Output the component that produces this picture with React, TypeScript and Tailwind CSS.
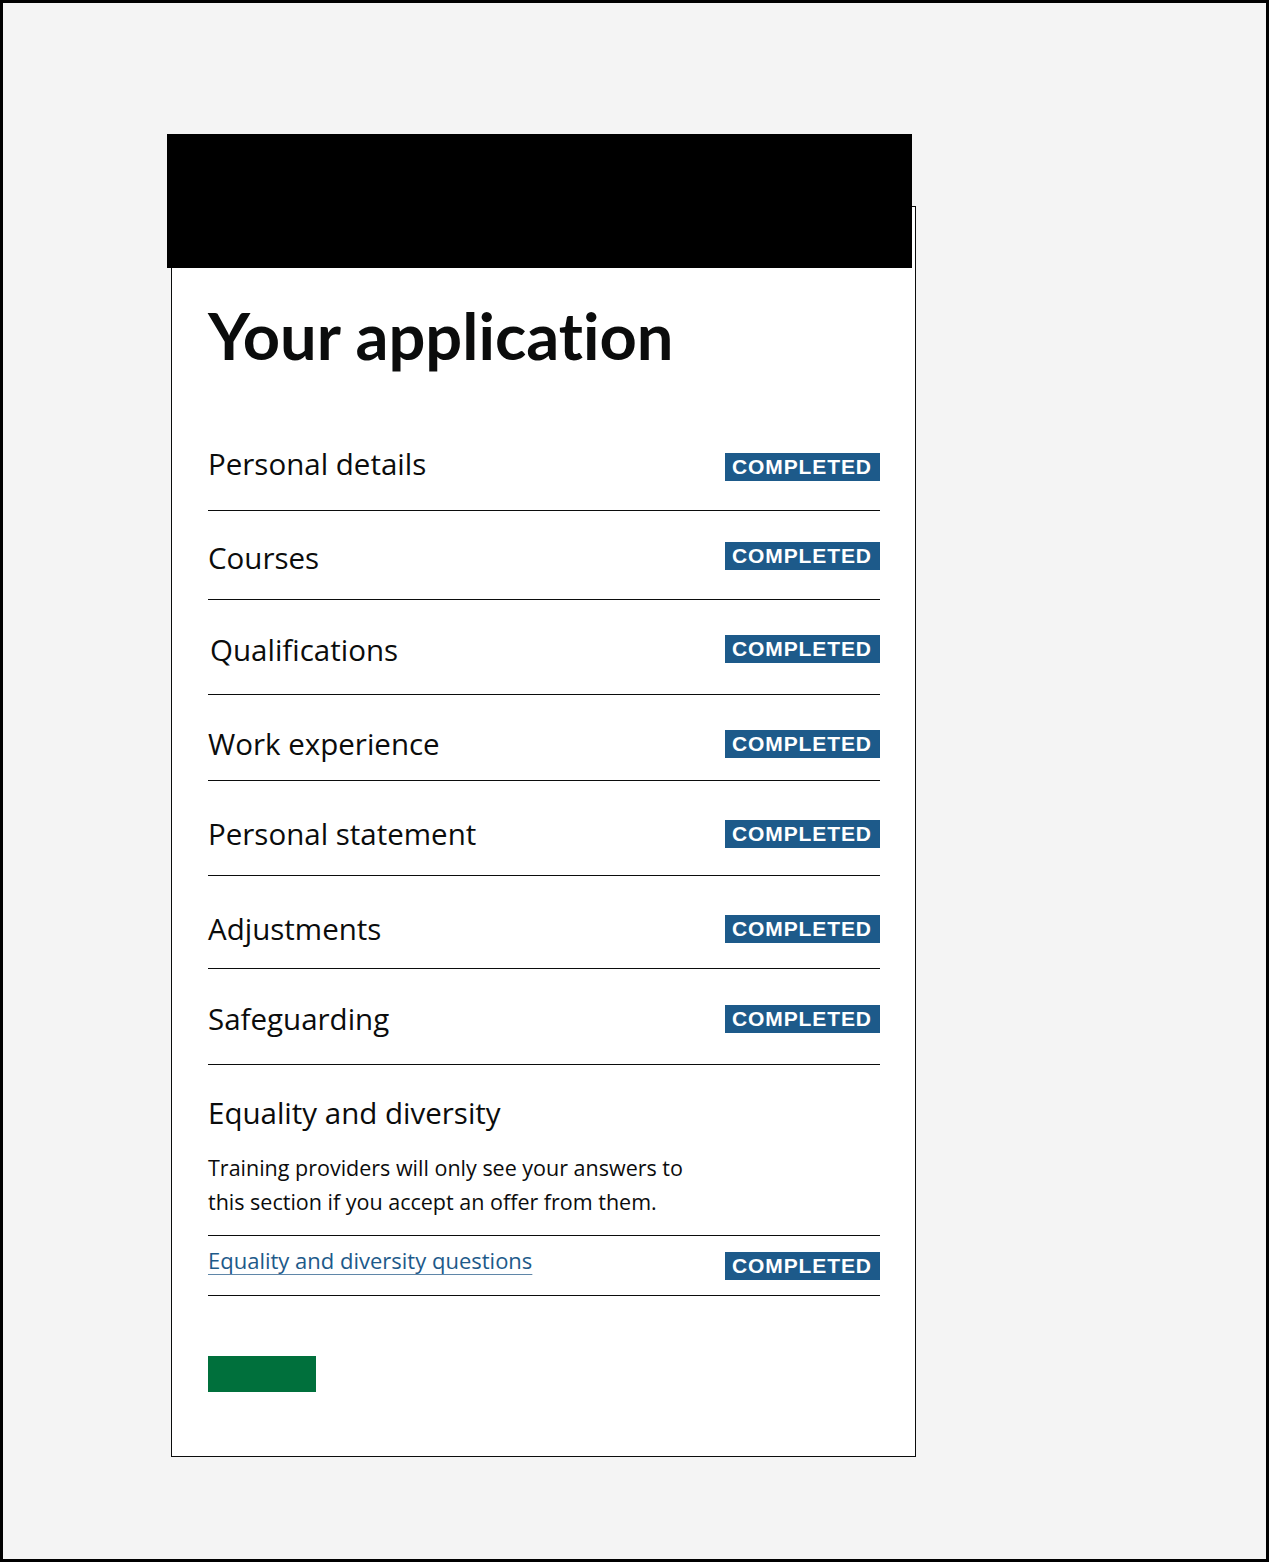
import React from "react";

const BLUE = "#1d5a8a";

function Badge() {
  return (
    <strong
      className="block h-[28px] w-[155px] shrink-0 bg-[#1d5a8a] pl-[7px] text-[21px] font-bold uppercase leading-[28px] tracking-[0.9px] text-white"
      style={{ fontFamily: '"Liberation Sans", Arial, sans-serif' }}
    >
      Completed
    </strong>
  );
}

type Row = { label: string; pt: string; pb: string; nudge: string };

const rows: Row[] = [
  { label: "Personal details", pt: "pt-[31px]", pb: "pb-[29px]", nudge: "-mt-[3px] mb-[3px]" },
  { label: "Courses", pt: "pt-[31px]", pb: "pb-[29px]", nudge: "mt-[2px] -mb-[2px]" },
  { label: "Qualifications", pt: "pt-[35px]", pb: "pb-[31px]", nudge: "mt-[1px] -mb-[1px] ml-[2px]" },
  { label: "Work experience", pt: "pt-[35px]", pb: "pb-[22px]", nudge: "" },
  { label: "Personal statement", pt: "pt-[39px]", pb: "pb-[27px]", nudge: "" },
  { label: "Adjustments", pt: "pt-[39px]", pb: "pb-[25px]", nudge: "" },
  { label: "Safeguarding", pt: "pt-[36px]", pb: "pb-[31px]", nudge: "" },
];

export default function App() {
  return (
    <div
      className="h-[1562px] w-[1269px] overflow-hidden border-[3px] border-black bg-[#f4f4f4] text-[#0b0c0c]"
      style={{ fontFamily: '"Open Sans", "Noto Sans", Arial, sans-serif' }}
    >
      <div className="relative ml-[168px] mt-[203px] w-[745px] border border-[#0b0c0c] bg-white pl-[36px] pr-[35px] pt-[96px] pb-[64px]">
        <div className="absolute left-[-5px] top-[-73px] h-[134px] w-[745px] bg-black" />

        <h1
          className="mb-[54px] text-[65px] font-bold leading-[65px] [font-variant-ligatures:none]"
          style={{ fontFamily: 'Lato, "Open Sans", sans-serif' }}
        >
          Your application
        </h1>

        <ul>
          {rows.map((r) => (
            <li
              key={r.label}
              className={`flex items-start justify-between border-b border-[#0b0c0c] ${r.pt} ${r.pb}`}
            >
              <span className={`whitespace-nowrap text-[29.5px] leading-[28px] ${r.nudge}`}>{r.label}</span>
              <Badge />
            </li>
          ))}
        </ul>

        <div className="border-b border-[#0b0c0c] pt-[34px] pb-[16px]">
          <h2 className="text-[29.5px] font-normal leading-[28px]">Equality and diversity</h2>
          <p className="mt-[24px] max-w-[495px] text-[21.5px] leading-[34px]">
            Training providers will only see your answers to this section if you accept an offer from them.
          </p>
        </div>

        <div className="flex items-start justify-between border-b border-[#0b0c0c] pt-[16px] pb-[15px]">
          <a
            href="#"
            className="block whitespace-nowrap text-[22px] leading-[16px] underline decoration-1 underline-offset-[5px]"
            style={{ color: BLUE, textDecorationColor: "#5f86a8" }}
          >
            Equality and diversity questions
          </a>
          <Badge />
        </div>

        <div className="mt-[60px] h-[36px] w-[108px] bg-[#00703c]" />
      </div>
    </div>
  );
}
